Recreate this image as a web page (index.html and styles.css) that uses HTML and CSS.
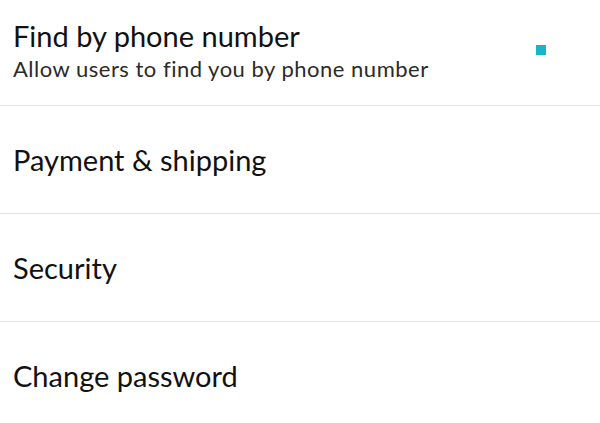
FILE: index.html
```html
<!DOCTYPE html>
<html>
	<head>
		<meta charset="UTF-8">
		<title>Settings</title>
		<link rel="stylesheet" href="styles.css">
	</head>
	<body>
		<ul class="list">
			<li class="item first">
				<div class="text">
					<p class="title">Find by phone number</p>
					<p class="sub">Allow users to find you by phone number</p>
				</div>
				<span class="check"></span>
			</li>
			<li class="item"><p class="title">Payment &amp; shipping</p></li>
			<li class="item"><p class="title">Security</p></li>
			<li class="item"><p class="title">Change password</p></li>
		</ul>
	</body>
</html>
```

FILE: styles.css
```css
*{
	margin: 0;
	padding: 0;
}
li{
	list-style: none;
}
body{
	background: #fff;
	font-family: Lato, "Noto Sans", sans-serif;
	color: #111;
}
.list{
	width: 600px;
}
.item{
	height: 107px;
	display: flex;
	align-items: center;
	justify-content: space-between;
	padding: 0 54px 0 13px;
	border-bottom: 1px solid #e3e3e3;
}
.item.first{
	box-sizing: border-box;
	height: 106px;
	padding-bottom: 6px;
}
.title{
	font-size: 29px;
	line-height: 34px;
}
.first .title{
	margin-bottom: 4px;
}
.sub{
	font-size: 22px;
	line-height: 24px;
	letter-spacing: 0.5px;
	color: #2a2a2a;
}
.check{
	width: 10px;
	height: 10px;
	background: #17b4cc;
}
```
